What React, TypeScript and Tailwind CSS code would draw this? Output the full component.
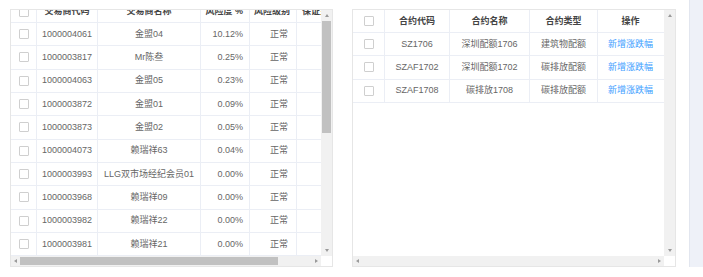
import React from "react";

const traderRows = [
  ["1000004061", "金盟04", "10.12%", "正常"],
  ["1000003817", "Mr陈叁", "0.25%", "正常"],
  ["1000004063", "金盟05", "0.23%", "正常"],
  ["1000003872", "金盟01", "0.09%", "正常"],
  ["1000003873", "金盟02", "0.05%", "正常"],
  ["1000004073", "赖瑞祥63", "0.04%", "正常"],
  ["1000003993", "LLG双市场经纪会员01", "0.00%", "正常"],
  ["1000003968", "赖瑞祥09", "0.00%", "正常"],
  ["1000003982", "赖瑞祥22", "0.00%", "正常"],
  ["1000003981", "赖瑞祥21", "0.00%", "正常"],
];

const contractRows = [
  ["SZ1706", "深圳配额1706", "建筑物配额"],
  ["SZAF1702", "深圳配额1702", "碳排放配额"],
  ["SZAF1708", "碳排放1708", "碳排放配额"],
];

const Checkbox = () => (
  <span className="block w-[10px] h-[10px] border border-[#cfcfcf] bg-white rounded-[1px]" />
);

const ArrowUp = () => (
  <span className="block w-0 h-0 border-x-[2.5px] border-x-transparent border-b-[3px] border-b-[#9a9a9a]" />
);
const ArrowDown = () => (
  <span className="block w-0 h-0 border-x-[2.5px] border-x-transparent border-t-[3px] border-t-[#9a9a9a]" />
);
const ArrowLeft = () => (
  <span className="block w-0 h-0 border-y-[2.5px] border-y-transparent border-r-[3px] border-r-[#9a9a9a]" />
);
const ArrowRight = () => (
  <span className="block w-0 h-0 border-y-[2.5px] border-y-transparent border-l-[3px] border-l-[#9a9a9a]" />
);

// vertical scrollbar, thumb optional
const VScroll = ({ thumb }: { thumb?: boolean }) => (
  <div className="flex flex-col items-center w-[11px] h-full bg-[#f1f1f1] shrink-0">
    <div className="h-[11px] flex items-center justify-center">
      <ArrowUp />
    </div>
    <div className="flex-1 w-full px-[1px]">
      {thumb && <div className="w-full h-[112px] bg-[#c1c1c1]" />}
    </div>
    <div className="h-[11px] flex items-center justify-center">
      <ArrowDown />
    </div>
  </div>
);

const HScroll = ({ thumb }: { thumb?: boolean }) => (
  <div className="flex h-[10px] shrink-0">
    <div className="flex flex-1 items-center bg-[#f1f1f1]">
      <div className="w-[9px] flex justify-center">
        <ArrowLeft />
      </div>
      <div className="flex-1 h-full py-[1px]">
        {thumb && <div className="w-[258px] h-full bg-[#c1c1c1]" />}
      </div>
      <div className="w-[9px] flex justify-center">
        <ArrowRight />
      </div>
    </div>
    <div className="w-[11px] bg-white" />
  </div>
);

const cell = "h-full flex items-center border-r border-[#ebeef5] shrink-0";

const TraderTable = () => (
  <div className="w-[323px] h-[258px] border border-[#e6e6e6] flex flex-col overflow-hidden">
    <div className="flex flex-1 min-h-0">
      <div className="flex-1 min-w-0 overflow-hidden">
        <div className="w-[360px] -mt-[9px]">
          <div className="flex h-[22px] border-b border-[#ebeef5] font-bold text-[#444]">
            <div className={`${cell} w-[26px] justify-center`}>
              <Checkbox />
            </div>
            <div className={`${cell} w-[61px] justify-center`}>交易商代码</div>
            <div className={`${cell} w-[103px] justify-center`}>交易商名称</div>
            <div className={`${cell} w-[49px] justify-end pr-[6px]`}>风险度 %</div>
            <div className={`${cell} w-[47px] justify-end pr-[6px]`}>风险级别</div>
            <div className={`${cell} w-[70px] pl-[5px]`}>保证金占用</div>
          </div>
          {traderRows.map(([code, name, risk, level]) => (
            <div
              key={code}
              className="flex h-[23.33px] border-b border-[#ebeef5] text-[#666]"
            >
              <div className={`${cell} w-[26px] justify-center`}>
                <Checkbox />
              </div>
              <div className={`${cell} w-[61px] justify-center`}>{code}</div>
              <div className={`${cell} w-[103px] justify-center whitespace-nowrap`}>
                {name}
              </div>
              <div className={`${cell} w-[49px] justify-end pr-[6px]`}>{risk}</div>
              <div className={`${cell} w-[47px] justify-end pr-[8px]`}>{level}</div>
              <div className={`${cell} w-[70px]`} />
            </div>
          ))}
        </div>
      </div>
      <VScroll thumb />
    </div>
    <HScroll thumb />
  </div>
);

const ContractTable = () => (
  <div className="w-[324px] h-[258px] border border-[#e6e6e6] flex flex-col overflow-hidden">
    <div className="flex flex-1 min-h-0">
      <div className="flex-1 min-w-0">
        <div className="flex h-[23px] border-b border-[#ebeef5] font-bold text-[#444]">
          <div className={`${cell} w-[32px] justify-center`}>
            <Checkbox />
          </div>
          <div className={`${cell} w-[65px] justify-center`}>合约代码</div>
          <div className={`${cell} w-[80px] justify-center`}>合约名称</div>
          <div className={`${cell} w-[68px] justify-center`}>合约类型</div>
          <div className={`${cell} w-[65px] justify-center border-r-0`}>操作</div>
        </div>
        {contractRows.map(([code, name, kind]) => (
          <div
            key={code}
            className="flex h-[23.33px] border-b border-[#ebeef5] text-[#666]"
          >
            <div className={`${cell} w-[32px] justify-center`}>
              <Checkbox />
            </div>
            <div className={`${cell} w-[65px] justify-center`}>{code}</div>
            <div className={`${cell} w-[80px] justify-center`}>{name}</div>
            <div className={`${cell} w-[68px] justify-center`}>{kind}</div>
            <div className={`${cell} w-[65px] justify-center border-r-0 text-[#409eff]`}>
              新增涨跌幅
            </div>
          </div>
        ))}
      </div>
      <VScroll />
    </div>
    <HScroll />
  </div>
);

export default function App() {
  return (
    <div
      className="relative w-[703px] h-[277px] bg-white overflow-hidden text-[9px] leading-none"
      style={{ fontFamily: '"Liberation Sans", "Noto Sans CJK SC", sans-serif' }}
    >
      <div className="flex pt-[9px] pl-[10px]">
        <TraderTable />
        <div className="w-[19px]" />
        <ContractTable />
        <div className="w-[13px]" />
        <div className="w-[14px] h-[267px] -mt-[9px] bg-[#eef1f8] border-l border-[#e2e6ef]" />
      </div>
    </div>
  );
}
